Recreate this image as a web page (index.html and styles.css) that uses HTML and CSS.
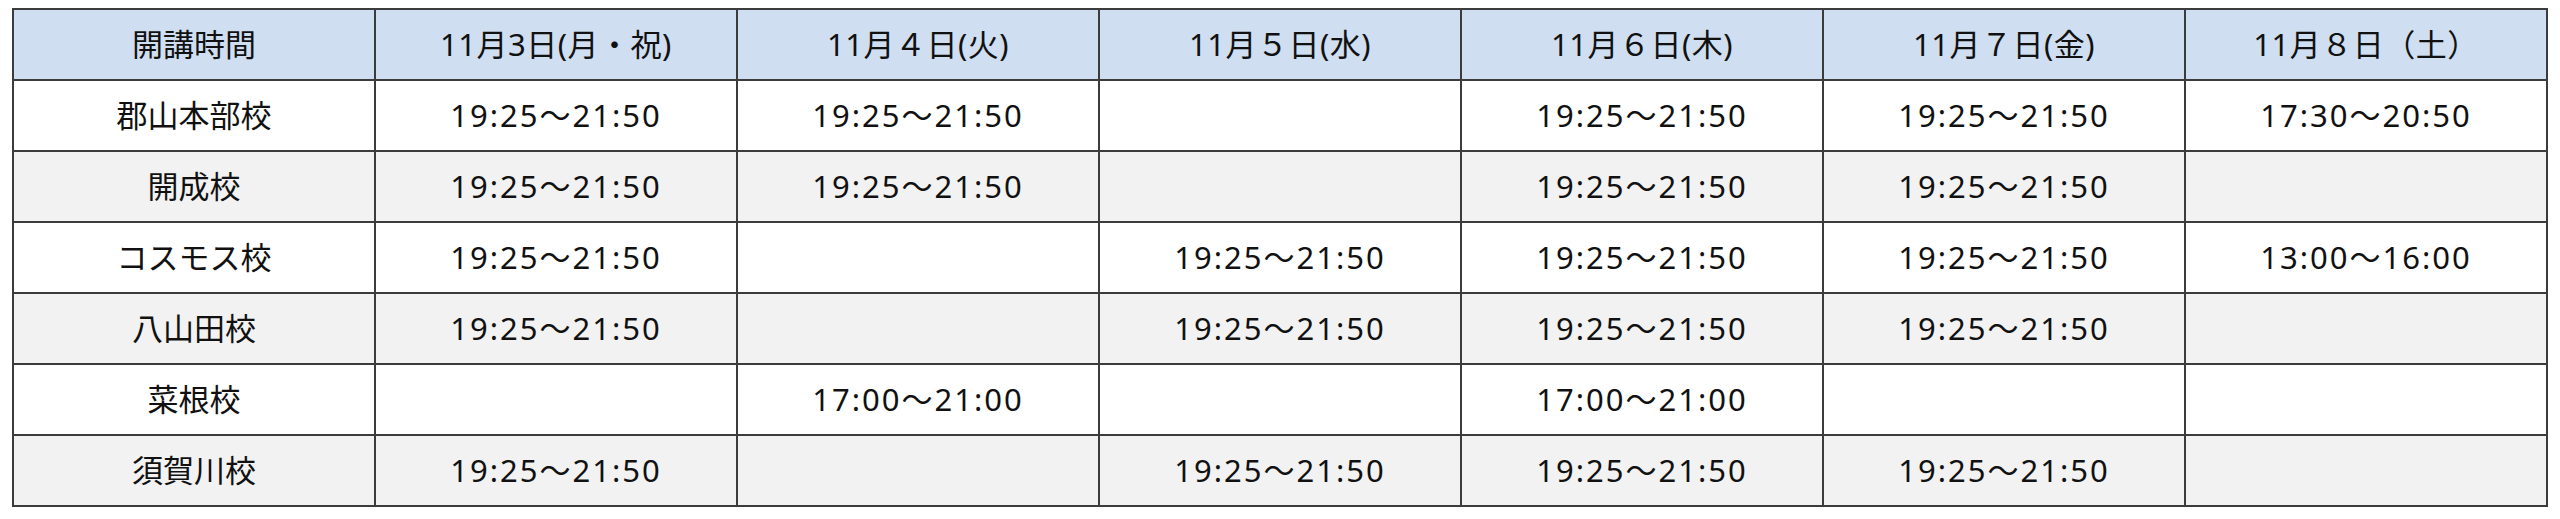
FILE: index.html
```html
<!DOCTYPE html>
<html lang="ja">
<head>
<meta charset="utf-8">
<title>開講時間</title>
<link rel="stylesheet" href="styles.css">
</head>
<body>
<table class="schedule">
  <thead>
    <tr>
      <th>開講時間</th>
      <th>11月3日(月・祝)</th>
      <th>11月４日(火)</th>
      <th>11月５日(水)</th>
      <th>11月６日(木)</th>
      <th>11月７日(金)</th>
      <th>11月８日（土）</th>
    </tr>
  </thead>
  <tbody>
    <tr>
      <td>郡山本部校</td>
      <td>19:25～21:50</td>
      <td>19:25～21:50</td>
      <td></td>
      <td>19:25～21:50</td>
      <td>19:25～21:50</td>
      <td>17:30～20:50</td>
    </tr>
    <tr>
      <td>開成校</td>
      <td>19:25～21:50</td>
      <td>19:25～21:50</td>
      <td></td>
      <td>19:25～21:50</td>
      <td>19:25～21:50</td>
      <td></td>
    </tr>
    <tr>
      <td>コスモス校</td>
      <td>19:25～21:50</td>
      <td></td>
      <td>19:25～21:50</td>
      <td>19:25～21:50</td>
      <td>19:25～21:50</td>
      <td>13:00～16:00</td>
    </tr>
    <tr>
      <td>八山田校</td>
      <td>19:25～21:50</td>
      <td></td>
      <td>19:25～21:50</td>
      <td>19:25～21:50</td>
      <td>19:25～21:50</td>
      <td></td>
    </tr>
    <tr>
      <td>菜根校</td>
      <td></td>
      <td>17:00～21:00</td>
      <td></td>
      <td>17:00～21:00</td>
      <td></td>
      <td></td>
    </tr>
    <tr>
      <td>須賀川校</td>
      <td>19:25～21:50</td>
      <td></td>
      <td>19:25～21:50</td>
      <td>19:25～21:50</td>
      <td>19:25～21:50</td>
      <td></td>
    </tr>
  </tbody>
</table>
</body>
</html>
```

FILE: styles.css
```css
html, body {
  margin: 0;
  padding: 0;
  background: #ffffff;
}

body {
  padding: 8px 12px;
  font-family: "Noto Sans", "Noto Sans CJK JP", sans-serif;
  color: #111111;
}

.schedule {
  width: 2536px;
  border-collapse: collapse;
  table-layout: fixed;
}

.schedule th,
.schedule td {
  height: 69px;
  padding: 0;
  border: 2px solid #3c3c3c;
  text-align: center;
  vertical-align: middle;
  font-size: 31px;
  font-weight: 400;
  line-height: 1;
}

.schedule th:not(:first-child) {
  letter-spacing: 0.5px;
}

.schedule td:not(:first-child) {
  letter-spacing: 2px;
}

.schedule thead th {
  background: #cfdef0;
}

.schedule tbody tr:nth-child(odd) td {
  background: #ffffff;
}

.schedule tbody tr:nth-child(even) td {
  background: #f2f2f2;
}
```
